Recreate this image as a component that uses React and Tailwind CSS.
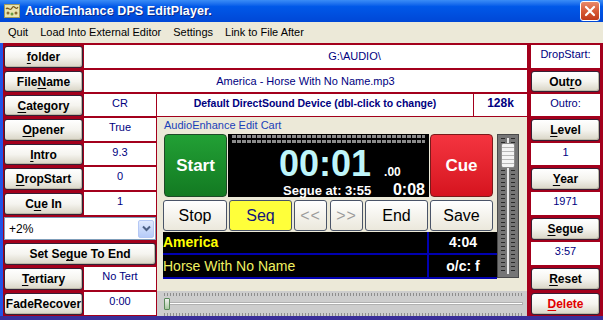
import React from "react";

const FONT = "font-['Liberation_Sans',Arial,sans-serif]";

function U({ text, u }) {
  if (u === undefined || u < 0) return text;
  return (
    <>
      {text.slice(0, u)}
      <span className="underline decoration-1 underline-offset-[2px]">{text[u]}</span>
      {text.slice(u + 1)}
    </>
  );
}

function Btn({ label, u, className = "", red }) {
  return (
    <div
      className={`flex items-center justify-center rounded-[3px] border border-[#352035] bg-linear-to-b from-[#ffffff] via-[#f5f4ef] to-[#d9d5c6] text-[12px] font-bold leading-none shadow-[inset_-1px_-1px_0_#bdb9a8] ${
        red ? "text-[#e00000]" : "text-black"
      } ${className}`}
    >
      <span>
        <U text={label} u={u} />
      </span>
    </div>
  );
}

function Cell({ children, className = "" }) {
  return (
    <div className={`flex justify-center bg-white pt-[3px] text-[11px] leading-[13px] text-[#000080] ${className}`}>
      {children}
    </div>
  );
}

function XpBtn({ children, className = "" }) {
  return (
    <div
      className={`flex items-center justify-center rounded-[3px] border border-[#4a5468] text-[16px] leading-none ${className}`}
    >
      {children}
    </div>
  );
}

export default function App() {
  const rowStarts = [
    "row-start-1",
    "row-start-2",
    "row-start-3",
    "row-start-4",
    "row-start-5",
    "row-start-6",
    "row-start-7",
    "row-start-8",
    "row-start-9",
    "row-start-10",
    "row-start-11",
  ];

  const leftBtns = [
    { r: 0, label: "folder", u: 0 },
    { r: 1, label: "FileName", u: 4 },
    { r: 2, label: "Category", u: 0, val: "CR" },
    { r: 3, label: "Opener", u: 0, val: "True" },
    { r: 4, label: "Intro", u: 0, val: "9.3" },
    { r: 5, label: "DropStart", u: 0, val: "0" },
    { r: 6, label: "Cue In", u: 1, val: "1" },
    { r: 9, label: "Tertiary", u: 0, val: "No Tert" },
    { r: 10, label: "FadeRecover", u: -1, val: "0:00" },
  ];

  const right = [
    { r: 0, cell: "DropStart:" },
    { r: 1, btn: "Outro", u: 3 },
    { r: 2, cell: "Outro:" },
    { r: 3, btn: "Level", u: 0 },
    { r: 4, cell: "1" },
    { r: 5, btn: "Year", u: 0 },
    { r: 6, cell: "1971" },
    { r: 7, btn: "Segue", u: 0 },
    { r: 8, cell: "3:57" },
    { r: 9, btn: "Reset", u: 0 },
    { r: 10, btn: "Delete", u: 0, red: true },
  ];

  return (
    <div className={`h-[320px] w-[603px] overflow-hidden bg-[#ece9d8] ${FONT}`}>
      {/* Title bar */}
      <div className="flex h-[22px] items-center bg-linear-to-b from-[#3a8cf6] via-[#0058e8] via-30% to-[#0047d6] pl-[4px] pr-[3px]">
        <svg width="16" height="16" viewBox="0 0 16 16" className="shrink-0">
          <rect x="0.5" y="1.5" width="15" height="13" fill="#e9e4b0" stroke="#a09a60" />
          <path d="M2 6 C4 3, 6 9, 8 5 S12 8, 14 4" stroke="#7a5a20" strokeWidth="1.3" fill="none" />
          <circle cx="4" cy="10" r="1.5" fill="#8a6a30" />
          <circle cx="8" cy="11" r="1.5" fill="#6a9a40" />
          <circle cx="12" cy="10" r="1.5" fill="#8a6a30" />
        </svg>
        <div className="ml-[5px] text-[12.5px] font-bold tracking-[0.1px] text-white [text-shadow:1px_1px_0_#0a2a8a]">
          AudioEnhance DPS EditPlayer.
        </div>
        <div className="ml-auto flex h-[20px] w-[20px] items-center justify-center rounded-[3px] border border-white bg-linear-to-b from-[#e8896a] via-[#d85a36] to-[#c03a1a]">
          <svg width="12" height="12" viewBox="0 0 12 12">
            <path d="M2 2 L10 10 M10 2 L2 10" stroke="white" strokeWidth="2.2" strokeLinecap="round" />
          </svg>
        </div>
      </div>

      {/* Menu bar */}
      <div className="flex h-[21px] items-center gap-[12px] bg-[#ece9d8] pl-[8px] text-[11px] text-black">
        <span>Quit</span>
        <span>Load Into External Editor</span>
        <span>Settings</span>
        <span>Link to File After</span>
      </div>

      {/* Body */}
      <div className="grid h-[273px] grid-cols-[3px_81px_73px_370px_76px] grid-rows-[26px_24px_24px_25px_24px_25px_25px_25px_25px_25px_25px] bg-[#a3001c]">
        <div className="col-start-1 row-span-11 row-start-1 bg-[#2253e6]" />

        {leftBtns.map((b) => (
          <React.Fragment key={b.label}>
            <Btn
              label={b.label}
              u={b.u}
              className={`col-start-2 ${rowStarts[b.r]} mx-[1px] mb-[1px] ${b.r === 0 ? "mt-[3px]" : "mt-[2px]"}`}
            />
            {b.val !== undefined && (
              <Cell className={`col-start-3 ${rowStarts[b.r]} my-[1px] mr-[1px]`}>{b.val}</Cell>
            )}
          </React.Fragment>
        ))}

        {/* folder path row */}
        <div className="col-span-2 col-start-3 row-start-1 mb-[1px] mt-[2px] flex items-center bg-white pl-[98px] text-[11px] text-[#000080]">
          <span className="w-full text-center">G:\AUDIO\</span>
        </div>
        {/* filename row */}
        <div className="col-span-2 col-start-3 row-start-2 my-[1px] flex items-center justify-center bg-white text-[11px] text-[#000080]">
          America - Horse With No Name.mp3
        </div>
        {/* device row */}
        <div className="col-start-4 row-start-3 my-[1px] flex">
          <div className="flex w-[316px] justify-center bg-white pt-[3px] text-[10.5px] font-bold leading-[13px] text-[#000080]">
            Default DirectSound Device (dbl-click to change)
          </div>
          <div className="ml-[1px] flex flex-1 justify-center bg-white pt-[2px] text-[12px] font-bold leading-[14px] text-[#000080]">
            128k
          </div>
        </div>

        {/* Dropdown */}
        <div className="col-span-2 col-start-2 row-start-8 mx-[1px] my-[1px] flex items-center border border-[#7f9db9] bg-white pl-[4px] text-[12px] text-black">
          <span>+2%</span>
          <div className="ml-auto mr-[1px] flex h-[18px] w-[16px] items-center justify-center rounded-[2px] border border-[#b5c8f5] bg-linear-to-b from-[#e0eafe] to-[#b6cbf8]">
            <svg width="9" height="7" viewBox="0 0 9 7">
              <path d="M1 1.5 L4.5 5 L8 1.5" stroke="#4d6185" strokeWidth="2" fill="none" />
            </svg>
          </div>
        </div>
        {/* Set Segue To End */}
        <Btn label="Set Segue To End" u={6} className="col-span-2 col-start-2 row-start-9 mx-[1px] mb-[1px] mt-[2px]" />

        {/* Center group box */}
        <div className="col-start-4 row-span-7 row-start-4 flex flex-col bg-[#ece9d8] pl-[6px]">
          <div className="h-[14px] pl-[1px] pt-[2px] text-[11px] leading-[12px] text-[#1a3fb8]">AudioEnhance Edit Cart</div>
          <div className="mt-[3px] flex">
            <div className="flex w-[334px] flex-col">
              {/* top row */}
              <div className="flex h-[63px] pl-[1px]">
                <div className="flex w-[63px] items-center justify-center rounded-[4px] border border-[#1f4a28] bg-linear-to-b from-[#22a035] to-[#137a22] text-[17px] font-bold text-white">
                  Start
                </div>
                <div className="ml-[1px] flex w-[201px] flex-col bg-black">
                  <div className="flex h-[12px] flex-col gap-[2px] px-[4px] pt-[1px]">
                    <div className="h-[3px] bg-[repeating-linear-gradient(90deg,#8c8c8c_0_4px,transparent_4px_5px)]" />
                    <div className="h-[3px] bg-[repeating-linear-gradient(90deg,#8c8c8c_0_4px,transparent_4px_5px)]" />
                  </div>
                  <div className="flex h-[36px] items-baseline pl-[51px]">
                    <span className="text-[36px] font-bold leading-[36px] text-[#bff6fa]">00:01</span>
                    <span className="ml-[13px] text-[12px] font-bold text-white">.00</span>
                  </div>
                  <div className="flex h-[15px] items-baseline justify-between pl-[55px] pr-[4px]">
                    <span className="text-[13px] font-bold leading-[15px] text-white">Segue at: 3:55</span>
                    <span className="text-[16px] font-bold leading-[15px] text-white">0:08</span>
                  </div>
                </div>
                <div className="ml-[1px] flex w-[63px] items-center justify-center rounded-[4px] border border-[#7a1a1a] bg-linear-to-b from-[#f4343f] to-[#d6121e] text-[17px] font-bold text-white">
                  Cue
                </div>
              </div>
              {/* button row */}
              <div className="mt-[3px] flex h-[31px]">
                <XpBtn className="w-[64px] bg-linear-to-b from-white to-[#ebe8dc] text-black">Stop</XpBtn>
                <XpBtn className="ml-[2px] w-[63px] bg-[#ffff3a] text-[#15157a]">Seq</XpBtn>
                <XpBtn className="ml-[2px] w-[33px] bg-linear-to-b from-white to-[#ebe8dc] tracking-[1px] text-[#9c9c9c]">&lt;&lt;</XpBtn>
                <XpBtn className="ml-[3px] w-[33px] bg-linear-to-b from-white to-[#ebe8dc] tracking-[1px] text-[#9c9c9c]">&gt;&gt;</XpBtn>
                <XpBtn className="ml-[2px] w-[63px] bg-linear-to-b from-white to-[#ebe8dc] text-black">End</XpBtn>
                <XpBtn className="ml-[2px] w-[63px] bg-linear-to-b from-white to-[#ebe8dc] text-black">Save</XpBtn>
              </div>
              {/* info panel */}
              <div className="mt-[1px] grid h-[47px] grid-cols-[266px_1fr] bg-black text-[14px]">
                <div className="flex h-[23px] items-center border-b-2 border-r-2 border-[#0000b0] font-bold text-[#ffff00]">America</div>
                <div className="flex h-[23px] items-center justify-center border-b-2 border-[#0000b0] font-bold text-white">4:04</div>
                <div className="flex h-[24px] items-center border-b-2 border-r-2 border-[#0000b0] text-[#f0f060]">Horse With No Name</div>
                <div className="flex h-[24px] items-center justify-center border-b-2 border-[#0000b0] font-bold text-white">o/c: f</div>
              </div>
            </div>
            {/* volume slider */}
            <div className="relative h-[144px] w-[22px] border border-[#4a4a4a] bg-[#767676]">
              <div className="absolute bottom-[3px] left-[3px] top-[3px] w-[4px] bg-[repeating-linear-gradient(180deg,#2a2a2a_0_1px,transparent_1px_4px)]" />
              <div className="absolute bottom-[3px] right-[3px] top-[3px] w-[4px] bg-[repeating-linear-gradient(180deg,#2a2a2a_0_1px,transparent_1px_4px)]" />
              <div className="absolute bottom-[3px] left-[9px] top-[3px] w-[2px] bg-[#e8e8e8]" />
              <div className="absolute left-[3px] top-[8px] h-[25px] w-[14px] rounded-[2px] border border-[#8a8a8a] bg-[repeating-linear-gradient(180deg,#f4f4f4_0_3px,#b8b8b8_3px_4px)]" />
            </div>
          </div>
        </div>

        {/* position slider */}
        <div className="col-start-4 row-start-11 flex flex-col bg-[#cdcdcd] pl-[7px] pr-[4px] pt-[2px]">
          <div className="h-[3px] bg-[repeating-linear-gradient(90deg,#8e8e8e_0_1px,transparent_1px_3px)]" />
          <div className="relative h-[15px]">
            <div className="absolute left-[2px] right-0 top-[6px] h-[3px] border border-[#b0b0b0] bg-white" />
            <div className="absolute left-[0px] top-[2px] h-[12px] w-[6px] rounded-[1px] border border-[#5a8a5a] bg-linear-to-b from-[#f0f0f0] to-[#a8c8a0]" />
          </div>
          <div className="mt-[2px] h-[3px] bg-[repeating-linear-gradient(90deg,#8e8e8e_0_1px,transparent_1px_3px)]" />
        </div>

        {/* right column */}
        {right.map((it) =>
          it.btn ? (
            <Btn
              key={it.btn}
              label={it.btn}
              u={it.u}
              red={it.red}
              className={`col-start-5 ${rowStarts[it.r]} mb-[1px] ml-[4px] mr-[3px] mt-[2px]`}
            />
          ) : (
            <Cell
              key={it.cell}
              className={`col-start-5 ${rowStarts[it.r]} ml-[4px] mr-[3px] ${it.r === 0 ? "mb-[1px] mt-[2px]" : "my-[1px]"}`}
            >
              {it.cell}
            </Cell>
          )
        )}
      </div>

      {/* bottom frame */}
      <div className="h-[4px] bg-[#3a2f9a]" />
    </div>
  );
}
